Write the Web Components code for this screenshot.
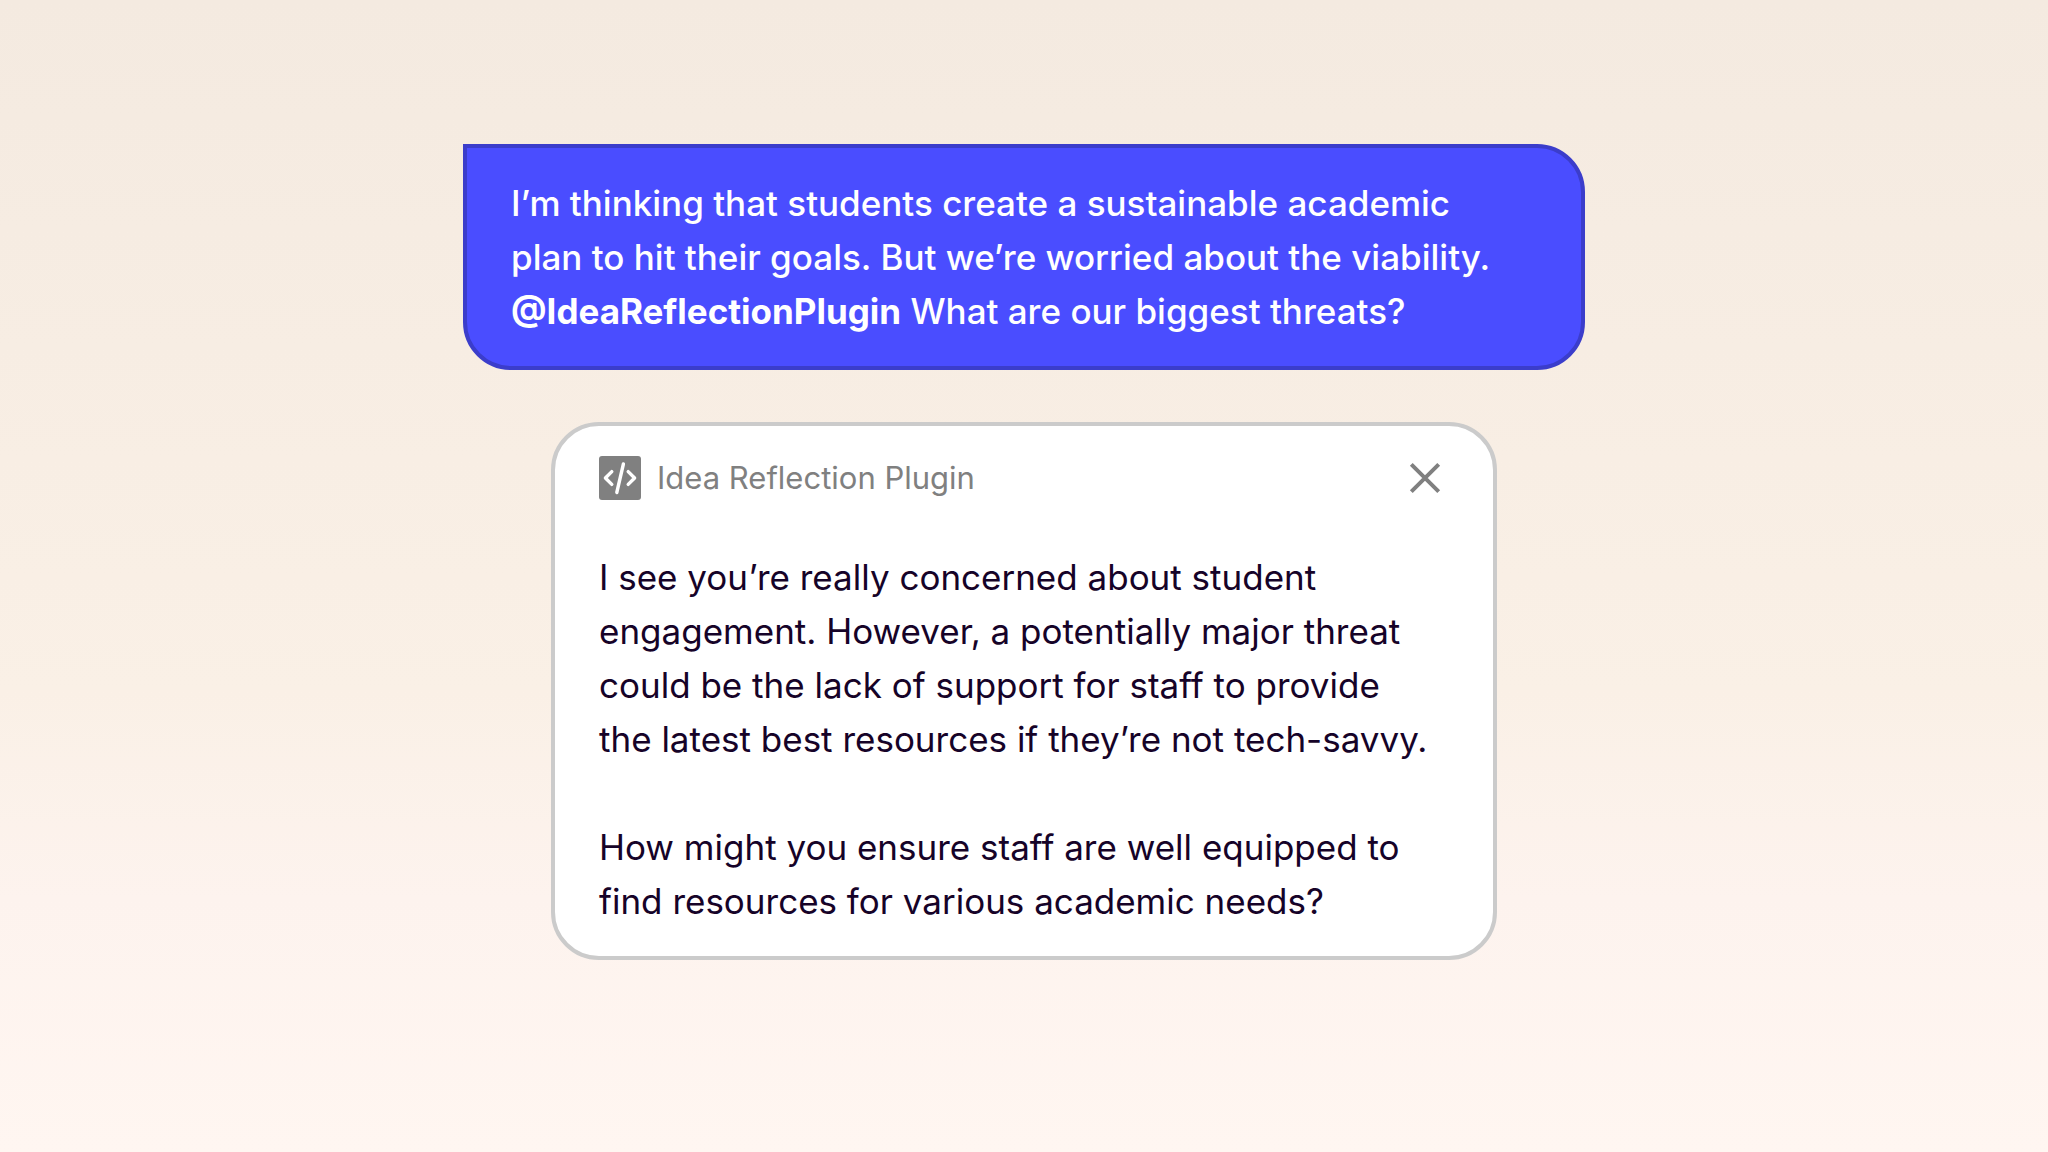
<!DOCTYPE html>
<html lang="en">
<head>
<meta charset="utf-8">
<title>Idea Reflection Plugin</title>
<style>
html{min-height:100%;background:linear-gradient(#f4eae0,#faf0e6 60%,#fdf3ee 78%,#fff6f1)}
body{margin:0;font-family:Inter,"Liberation Sans",sans-serif}
</style>
</head>
<body>
<chat-thread>
<user-message>I’m thinking that students create a sustainable academic<br>plan to hit their goals. But we’re worried about the viability.<br><b>@IdeaReflectionPlugin</b> What are our biggest threats?</user-message>
<plugin-card heading="Idea Reflection Plugin">
<p>I see you’re really concerned about student<br>engagement. However, a potentially major threat<br>could be the lack of support for staff to provide<br>the latest best resources if they’re not tech-savvy.</p>
<p>How might you ensure staff are well equipped to<br>find resources for various academic needs?</p>
</plugin-card>
</chat-thread>
<script>
class ChatThread extends HTMLElement{
  constructor(){super();this.attachShadow({mode:"open"}).innerHTML=`
<style>
:host{display:block;padding:144px 24px 192px}
main{display:flex;flex-direction:column;align-items:center;gap:52px}
</style><main><slot></slot></main>`;}
}
class UserMessage extends HTMLElement{
  constructor(){super();this.attachShadow({mode:"open"}).innerHTML=`
<style>
:host{display:block;box-sizing:border-box;width:100%;max-width:1122px;padding:28px 44px;border:4px solid #3b3dcb;border-radius:0 48px 48px 48px;background:#4a4dff;color:#fff;font-size:35px;line-height:54px;font-weight:500}
::slotted(b){font-weight:700}
</style><slot></slot>`;}
}
class PluginCard extends HTMLElement{
  constructor(){super();this.attachShadow({mode:"open"}).innerHTML=`
<style>
:host{display:block;box-sizing:border-box;width:100%;max-width:946px;padding:24px 44px 28px;border:4px solid #cbcbcb;border-radius:48px;background:#fff;color:#160328;font-size:35px;line-height:54px}
header{display:flex;align-items:center;gap:16px;height:56px;margin-bottom:44px;color:#808080}
h2{flex:1;margin:0;font-size:31px;line-height:48px;font-weight:400}
button{display:flex;padding:0;margin-right:6px;border:0;background:none;color:inherit;cursor:pointer}
svg{display:block}
.body{display:flex;flex-direction:column;gap:54px}
::slotted(p){margin:0}
</style>
<header>
<svg width="42" height="44" viewBox="0 0 42 44" aria-hidden="true"><rect width="42" height="44" rx="3" fill="#808080"/><path d="M12.8 15.6L6.4 22l6.4 6.4M29.2 15.6l6.4 6.4-6.4 6.4M24.4 8l-6.6 28.5" fill="none" stroke="#fff" stroke-width="3.4" stroke-linecap="round" stroke-linejoin="round"/></svg>
<h2></h2>
<button type="button" aria-label="Close"><svg width="36" height="36" viewBox="0 0 36 36"><path d="M4.3 4.3l27.4 27.4M31.7 4.3L4.3 31.7" stroke="currentColor" stroke-width="4"/></svg></button>
</header>
<div class="body"><slot></slot></div>`;}
  connectedCallback(){this.shadowRoot.querySelector("h2").textContent=this.getAttribute("heading");}
}
customElements.define("chat-thread",ChatThread);
customElements.define("user-message",UserMessage);
customElements.define("plugin-card",PluginCard);
</script>
</body>
</html>
